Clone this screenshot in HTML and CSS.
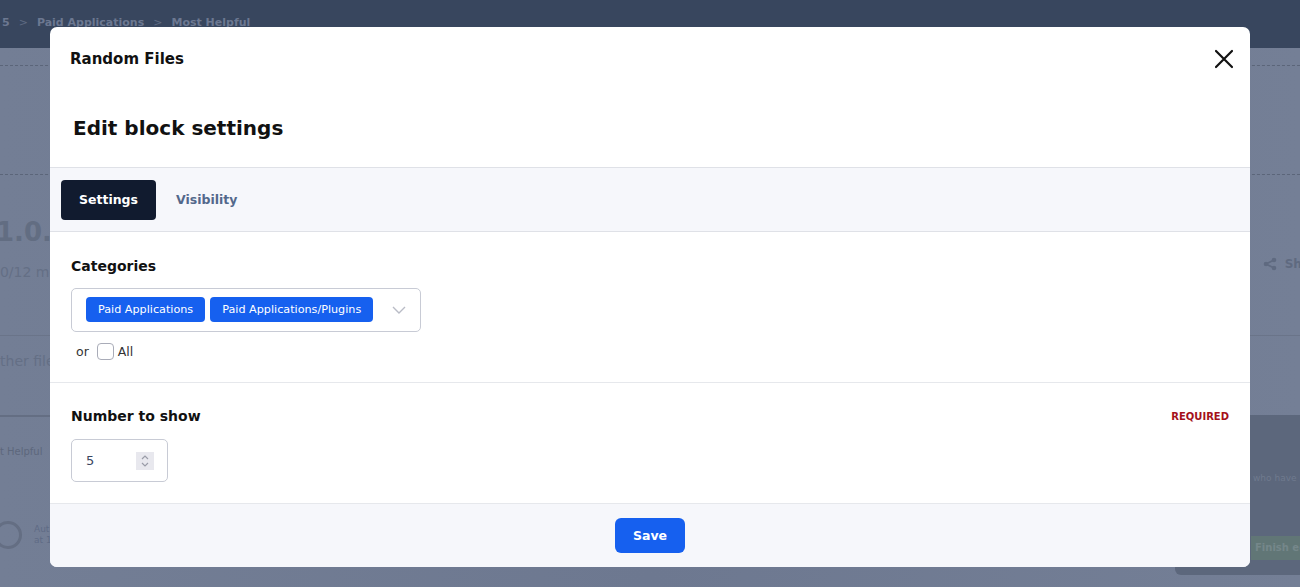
FILE: index.html
```html
<!DOCTYPE html>
<html>
<head>
<meta charset="utf-8">
<link rel="stylesheet" href="styles.css">
</head>
<body>
<div class="page">
  <header class="site-head">
    <nav class="crumbs"><span>5</span><span class="sep">&gt;</span><span>Paid Applications</span><span class="sep">&gt;</span><span>Most Helpful</span></nav>
  </header>
  <main class="content">
    <div class="dash"></div>
    <div class="dash second"></div>
    <div class="file-row">
      <div class="file-meta">
        <div class="version">1.0.5</div>
        <div class="date">10/12 months ago</div>
      </div>
      <div class="share"><svg width="14" height="14" viewBox="0 0 14 14"><circle cx="3" cy="7" r="2.3" fill="#5f6a80"/><circle cx="11" cy="3" r="2.3" fill="#5f6a80"/><circle cx="11" cy="11" r="2.3" fill="#5f6a80"/><path d="M3 7L11 3M3 7L11 11" stroke="#5f6a80" stroke-width="1.6"/></svg>Share</div>
    </div>
    <div class="other">Other files</div>
    <div class="lower">
      <div class="lower-left">
        <div class="helpful">Most Helpful</div>
        <div class="avatar-row"><span class="avatar"></span><span class="av-text">Author<br>at 10:42</span></div>
      </div>
      <div class="lower-right">
        <div class="who">who have been the most helpful</div>
        <div class="finish">Finish editing</div>
      </div>
    </div>
  </main>
</div>

<div class="modal">
  <div class="modal-head">
    <div class="modal-title">Random Files</div>
    <button class="close" aria-label="Close"><svg width="20" height="20" viewBox="0 0 20 20"><path d="M2 2L18 18M18 2L2 18" stroke="#111" stroke-width="2.2" stroke-linecap="round"/></svg></button>
  </div>
  <h2 class="modal-heading">Edit block settings</h2>
  <div class="tabs">
    <button class="tab active">Settings</button>
    <button class="tab">Visibility</button>
  </div>
  <section class="field">
    <div class="label">Categories</div>
    <div class="select">
      <span class="chip">Paid Applications</span>
      <span class="chip">Paid Applications/Plugins</span>
      <svg class="chev" width="14" height="8" viewBox="0 0 14 8"><path d="M1 1L7 7L13 1" fill="none" stroke="#b9bcc6" stroke-width="1.4"/></svg>
    </div>
    <div class="or-row"><span class="or">or</span><span class="check"></span><span class="all">All</span></div>
  </section>
  <section class="field second">
    <div class="label-row"><div class="label">Number to show</div><div class="required">REQUIRED</div></div>
    <div class="num">
      <span class="num-val">5</span>
      <span class="spin"><svg width="12" height="16" viewBox="0 0 12 16"><path d="M3 6L6 3L9 6M3 10L6 13L9 10" fill="none" stroke="#9a9ca8" stroke-width="1.2"/></svg></span>
    </div>
  </section>
  <footer class="modal-foot">
    <button class="save">Save</button>
  </footer>
</div>
</body>
</html>
```
FILE: styles.css
```css
* { box-sizing: border-box; }
html, body { margin: 0; padding: 0; }
body {
  width: 1300px;
  height: 587px;
  overflow: hidden;
  font-family: "DejaVu Sans", Verdana, sans-serif;
  background: #717c93;
}
.page { width: 1300px; height: 587px; overflow: hidden; }
.site-head {
  height: 48px;
  background: #38465e;
  padding: 16px 0 0 2px;
}
.crumbs {
  display: flex;
  gap: 9px;
  font-size: 11px;
  line-height: 14px;
  font-weight: bold;
  color: #6c7891;
}
.crumbs .sep { font-weight: normal; color: #5e6a82; }
.content {
  background: linear-gradient(90deg, #737e95 0%, #6d7890 50%, #747f96 100%);
  height: 539px;
  padding-top: 17px;
}
.dash { border-top: 1px dashed #5b6579; height: 0; }
.dash.second { margin-top: 108px; }
.file-row {
  display: flex;
  justify-content: space-between;
  margin-top: 42px;
}
.version {
  font-size: 26px;
  line-height: 30px;
  font-weight: bold;
  color: #626d82;
  margin-left: -4px;
}
.date { font-size: 14px; line-height: 16px; color: #646f85; margin-top: 17px; margin-left: -9px; }
.share {
  display: flex;
  align-items: center;
  gap: 8px;
  font-size: 12px;
  line-height: 14px;
  font-weight: bold;
  color: #5f6a80;
  margin-top: 40px;
  margin-right: -24px;
  align-self: flex-start;
}
.other {
  border-top: 1px solid #6a7489;
  margin-top: 55px;
  padding-top: 17px;
  font-size: 14px;
  line-height: 17px;
  color: #646f85;
  text-indent: -11px;
}
.lower {
  display: flex;
  justify-content: space-between;
  margin-top: 45px;
  border-top: 2px solid #646e83;
  height: 160px;
}
.lower-left { padding: 29px 0 0 0; }
.helpful { font-size: 10px; line-height: 12px; color: #5d677c; margin-left: -20px; }
.avatar-row { display: flex; align-items: center; gap: 12px; margin-top: 63px; }
.avatar { width: 28px; height: 28px; border-radius: 50%; border: 3px solid #646e83; margin-left: -6px; }
.av-text { font-size: 9px; line-height: 11px; color: #5f6b85; }
.lower-right {
  width: 125px;
  background: #5c677c;
  border-radius: 0 0 0 6px;
  padding: 57px 0 0 78px;
  overflow: hidden;
  white-space: nowrap;
  margin-top: -2px;
}
.who { font-size: 9px; line-height: 12px; color: #6f7a8e; }
.finish {
  margin-top: 52px;
  margin-left: -2px;
  background: #617676;
  color: #75878a;
  font-size: 10px;
  line-height: 12px;
  font-weight: bold;
  padding: 6px 4px;
}

/* modal */
.modal {
  position: absolute;
  left: 50px;
  top: 27px;
  width: 1200px;
  height: 540px;
  background: #fff;
  border-radius: 7px;
  overflow: hidden;
  color: #111;
  display: flex;
  flex-direction: column;
}
.modal-head {
  display: flex;
  justify-content: space-between;
  align-items: center;
  padding: 21px 16px 0 20px;
  height: 43px;
}
.modal-title { font-size: 15px; font-weight: bold; line-height: 22px; }
.close {
  border: 0;
  background: none;
  padding: 0;
  width: 20px;
  height: 20px;
  display: flex;
}
.modal-heading {
  margin: 0;
  font-size: 20px;
  line-height: 28px;
  padding: 44px 23px 25px;
  font-weight: bold;
}
.tabs {
  display: flex;
  align-items: center;
  background: #f6f7fb;
  border-top: 1px solid #dfe1e7;
  border-bottom: 1px solid #dfe1e7;
  padding: 11px 11px;
  height: 65px;
}
.tab {
  border: 0;
  background: none;
  font-family: inherit;
  font-size: 12.5px;
  font-weight: bold;
  color: #53688b;
  height: 40px;
  padding: 0 20px;
  border-radius: 4px;
  cursor: pointer;
}
.tab.active {
  background: #111b2f;
  color: #fff;
  padding: 0 18px;
}
.field {
  padding: 24px 21px 22px;
  border-bottom: 1px solid #e6e8ec;
}
.field.second { padding: 23px 21px 21px; }
.label { font-size: 14px; font-weight: bold; line-height: 20px; }
.label-row { display: flex; justify-content: space-between; align-items: center; }
.required { font-size: 10px; font-weight: bold; color: #a4101a; }
.select {
  margin-top: 12px;
  width: 350px;
  height: 44px;
  border: 1px solid #c8cbd5;
  border-radius: 5px;
  display: flex;
  align-items: center;
  gap: 5px;
  padding: 0 14px;
}
.chip {
  background: #1660ef;
  color: #fff;
  font-size: 11.2px;
  height: 25px;
  line-height: 25px;
  padding: 0 12px;
  border-radius: 4px;
  margin-top: -2px;
}
.chev { margin-left: auto; margin-right: 0; }
.or-row {
  display: flex;
  align-items: center;
  height: 18px;
  margin-top: 10px;
  margin-left: 5px;
  font-size: 12.5px;
  color: #333;
}
.check {
  width: 17px;
  height: 17px;
  border: 1px solid #a9acb8;
  border-radius: 4px;
  margin: 0 4px 0 8px;
  background: #fff;
}
.num {
  margin-top: 13px;
  width: 97px;
  height: 43px;
  border: 1px solid #c8cbd5;
  border-radius: 5px;
  display: flex;
  align-items: center;
  padding: 0 13px 0 14px;
  justify-content: space-between;
}
.num-val { font-size: 13px; color: #3a4660; }
.spin {
  width: 18px;
  height: 18px;
  background: #e8e8ee;
  display: flex;
  align-items: center;
  justify-content: center;
}
.modal-foot {
  flex: 1;
  background: #f6f7fb;
  display: flex;
  justify-content: center;
  padding-top: 14px;
}
.save {
  border: 0;
  background: #1660ef;
  color: #fff;
  font-family: inherit;
  font-size: 12.5px;
  font-weight: bold;
  height: 35px;
  width: 70px;
  border-radius: 6px;
}
```
